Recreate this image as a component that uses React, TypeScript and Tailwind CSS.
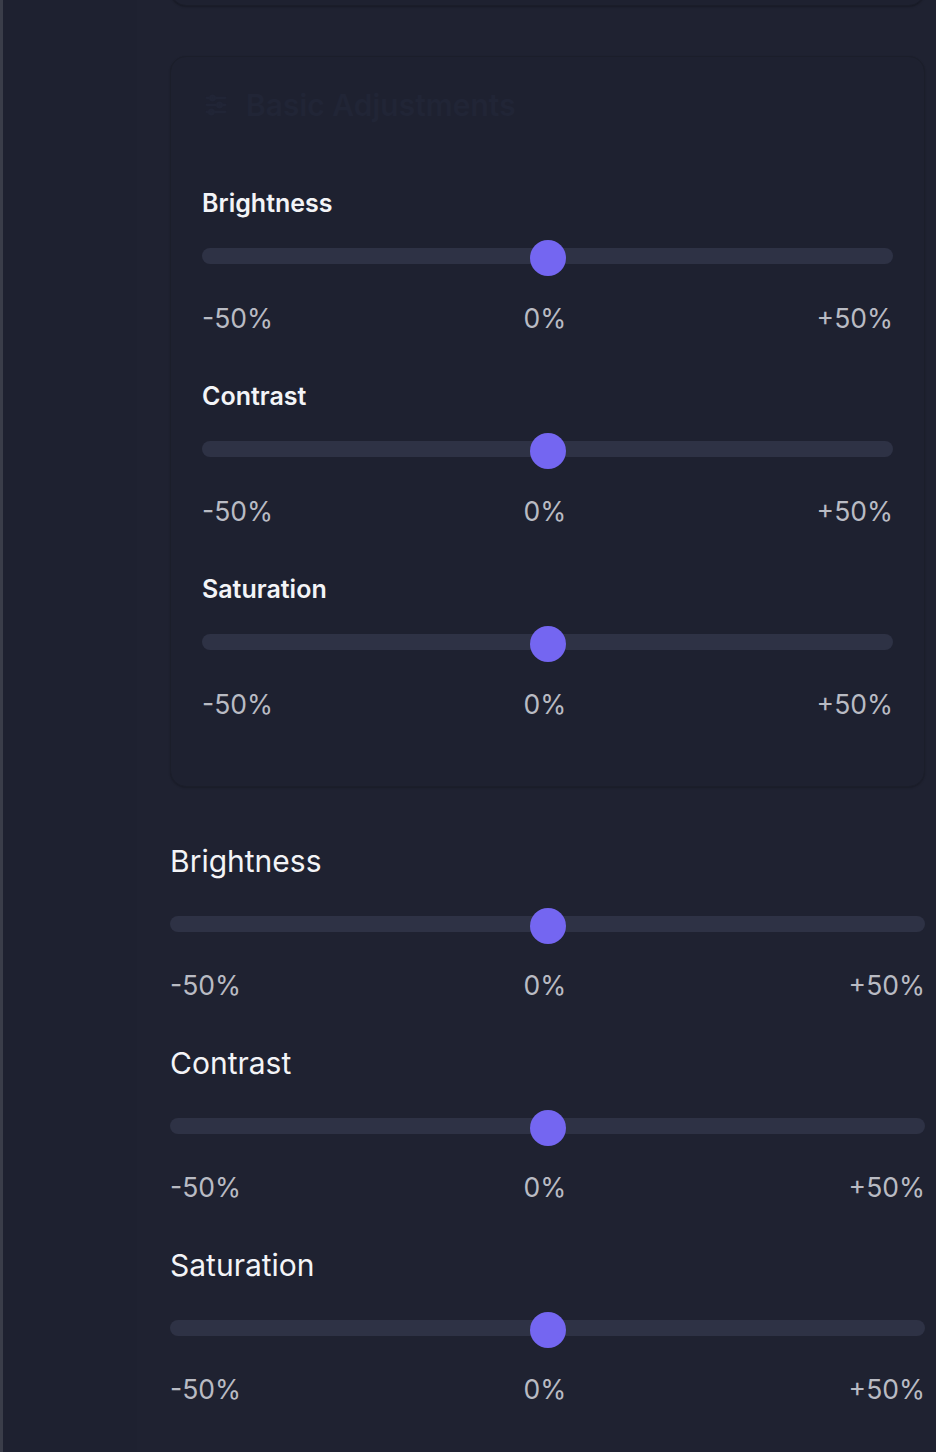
import React from 'react';

interface SliderRowProps {
  label: string;
  variant: 'card' | 'plain';
}

const SliderRow: React.FC<SliderRowProps> = ({ label, variant }) => {
  const isCard = variant === 'card';
  return (
    <div className={isCard ? 'pb-[44px]' : 'pb-[42px]'}>
      <div
        className={
          isCard
            ? 'text-[25px] leading-[32px] font-semibold text-[#f3f4f7]'
            : 'text-[30px] leading-[36px] font-normal text-[#f3f4f7]'
        }
      >
        {label}
      </div>
      <div className={isCard ? 'relative mt-[29px] h-4' : 'relative mt-[37px] h-4'}>
        <div className="h-4 w-full rounded-full bg-[#2e3245]" />
        <div className="absolute left-1/2 top-[-8px] h-9 w-9 -translate-x-1/2 rounded-full bg-[#7466f1]" />
      </div>
      <div
        className={
          isCard
            ? 'mt-[36px] flex justify-between text-[26.5px] leading-[36px] text-[#b9bbc3]'
            : 'mt-[35px] flex justify-between text-[26.5px] leading-[36px] text-[#b9bbc3]'
        }
      >
        <span>-50%</span>
        <span>0%</span>
        <span>+50%</span>
      </div>
    </div>
  );
};

const App: React.FC = () => {
  const sliders = ['Brightness', 'Contrast', 'Saturation'];

  return (
    <div
      className="flex min-h-[1452px] w-full overflow-hidden bg-[#1f2231]"
      style={{ fontFamily: 'Inter, "Noto Sans", sans-serif' }}
    >
      {/* sidebar */}
      <div className="w-[137px] shrink-0 border-l-[3px] border-[#3a3d49] bg-[#1e2130]" />

      {/* main */}
      <div className="flex-1 pl-[33px] pr-[11px]">
        <div className="-mt-[40px] h-[46px] rounded-2xl border border-[#1a1d29] bg-[#1e2130] shadow-[0_1px_2px_rgba(0,0,0,0.25)]" />

        <div className="mt-[50px] rounded-2xl border border-[#1b1e2a] bg-[#1e2130] px-[31px] pt-[30px] pb-[20px] shadow-[0_1px_2px_rgba(0,0,0,0.2)]">
          <div className="flex items-center gap-4 text-[30px] leading-[36px] font-semibold text-[#212536]">
            <svg width="28" height="28" viewBox="0 0 24 24" fill="none" stroke="currentColor" strokeWidth="2" strokeLinecap="round">
              <line x1="4" y1="6" x2="20" y2="6" />
              <line x1="4" y1="12" x2="20" y2="12" />
              <line x1="4" y1="18" x2="20" y2="18" />
              <circle cx="9" cy="6" r="2" fill="currentColor" />
              <circle cx="15" cy="12" r="2" fill="currentColor" />
              <circle cx="8" cy="18" r="2" fill="currentColor" />
            </svg>
            <span>Basic Adjustments</span>
          </div>
          <div className="mt-[64px]">
            {sliders.map((s) => (
              <SliderRow key={s} label={s} variant="card" />
            ))}
          </div>
        </div>

        <div className="mt-[56px]">
          {sliders.map((s) => (
            <SliderRow key={s} label={s} variant="plain" />
          ))}
        </div>
      </div>
    </div>
  );
};

export default App;
